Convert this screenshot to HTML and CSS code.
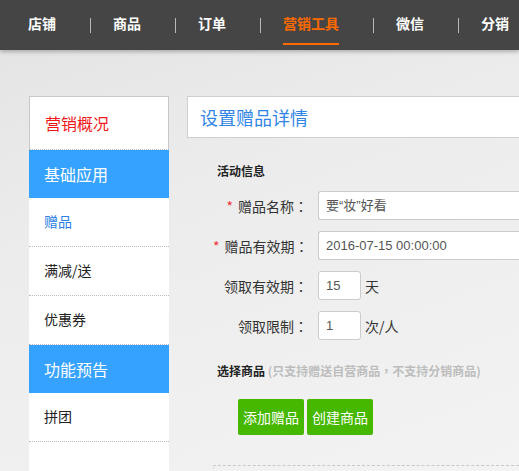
FILE: index.html
```html
<!DOCTYPE html>
<html lang="zh-CN">
<head>
<meta charset="utf-8">
<title>设置赠品详情</title>
<link rel="stylesheet" href="styles.css">
</head>
<body>
<header class="topbar">
  <nav class="nav">
    <a class="nav-item">店铺</a><span class="sep"></span>
    <a class="nav-item">商品</a><span class="sep"></span>
    <a class="nav-item">订单</a><span class="sep"></span>
    <a class="nav-item active">营销工具</a><span class="sep"></span>
    <a class="nav-item">微信</a><span class="sep"></span>
    <a class="nav-item">分销</a>
  </nav>
</header>
<div class="page">
  <aside class="sidebar">
    <div class="side-head">营销概况</div>
    <div class="side-group">基础应用</div>
    <div class="side-item current">赠品</div>
    <div class="side-item">满减/送</div>
    <div class="side-item">优惠券</div>
    <div class="side-group">功能预告</div>
    <div class="side-item">拼团</div>
  </aside>
  <main class="main">
    <div class="panel-head">设置赠品详情</div>
    <section class="form">
      <h3 class="section-title">活动信息</h3>
      <div class="row">
        <label class="label"><span class="req">*</span>赠品名称<span class="colon" lang="zh-TW">：</span></label>
        <div class="input wide">要“妆”好看</div>
      </div>
      <div class="row">
        <label class="label"><span class="req">*</span>赠品有效期<span class="colon" lang="zh-TW">：</span></label>
        <div class="input wide">2016-07-15 00:00:00</div>
      </div>
      <div class="row">
        <label class="label">领取有效期<span class="colon" lang="zh-TW">：</span></label>
        <div class="input small">15</div>
        <span class="unit">天</span>
      </div>
      <div class="row">
        <label class="label">领取限制<span class="colon" lang="zh-TW">：</span></label>
        <div class="input small">1</div>
        <span class="unit">次/人</span>
      </div>
      <h3 class="section-title goods">选择商品 <span class="note">(只支持赠送自营商品<span class="comma" lang="zh-TW">，</span>不支持分销商品)</span></h3>
      <div class="buttons">
        <button class="btn">添加赠品</button>
        <button class="btn">创建商品</button>
      </div>
      <div class="footer-line"></div>
    </section>
  </main>
</div>
</body>
</html>
```
FILE: styles.css
```css
* { box-sizing: border-box; }
html, body { margin: 0; padding: 0; }
body {
  width: 519px;
  height: 471px;
  overflow: hidden;
  font-family: "Noto Sans CJK SC", "Liberation Sans", sans-serif;
  background: linear-gradient(160deg, #e3e3e3 0%, #ececec 40%, #f3f3f3 100%);
  color: #333;
}
.topbar {
  height: 50px;
  background: #454545;
  box-shadow: 0 2px 4px rgba(0,0,0,0.25);
  position: relative;
  z-index: 1;
}
.nav {
  display: flex;
  align-items: center;
  height: 50px;
  padding-left: 28px;
  white-space: nowrap;
  overflow: hidden;
}
.nav-item {
  display: block;
  height: 50px;
  line-height: 46px;
  font-size: 14px;
  font-weight: bold;
  color: #fff;
  flex: none;
}
.nav-item.active {
  color: #ff6a00;
  position: relative;
}
.nav-item.active::after {
  content: "";
  position: absolute;
  left: 0;
  right: 0;
  top: 43px;
  height: 2px;
  background: #ff6a00;
}
.sep {
  flex: none;
  width: 1px;
  height: 15px;
  margin: 0 22px 0 34px;
  background: #b8b8b8;
}
.page {
  display: flex;
  align-items: flex-start;
  padding: 46px 0 0 29px;
  height: 421px;
  overflow: hidden;
}
.sidebar {
  width: 140px;
  flex: none;
  background: #fff;
  height: 375px;
}
.side-head {
  height: 54px;
  border: 1px solid #c8c8c8;
  border-bottom: 1px dotted #bbb;
  color: #f01818;
  font-size: 16px;
  line-height: 52px;
  padding-left: 15px;
}
.side-group {
  height: 48px;
  background: #36a2ff;
  color: #fff;
  font-size: 16px;
  line-height: 48px;
  padding-left: 15px;
}
.side-item {
  height: 49px;
  border-bottom: 1px dotted #bbb;
  font-size: 14px;
  line-height: 46px;
  padding-left: 15px;
  color: #222;
}
.side-item.current { color: #2b7fe6; }
.main {
  flex: 1;
  margin-left: 18px;
  min-width: 0;
}
.panel-head {
  height: 42px;
  background: #fff;
  border: 1px solid #cfcfcf;
  border-right: none;
  color: #2f84e6;
  font-size: 18px;
  line-height: 40px;
  padding-left: 12px;
  white-space: nowrap;
}
.form {
  padding: 24px 0 0 26px;
}
.section-title {
  margin: 0 0 11px 4px;
  height: 18px;
  font-size: 12px;
  font-weight: bold;
  color: #222;
  line-height: 18px;
  white-space: nowrap;
}
.row {
  display: flex;
  align-items: center;
  height: 29px;
  margin-bottom: 11px;
}
.label {
  width: 95px;
  flex: none;
  text-align: right;
  font-size: 14px;
  color: #333;
  margin-right: 10px;
  white-space: nowrap;
}
.colon, .comma { font-family: "Noto Sans CJK TC", sans-serif; }
.req {
  color: #f0323c;
  margin-right: 5px;
  font-size: 14px;
}
.input {
  height: 29px;
  background: #fff;
  border: 1px solid #ccc;
  border-radius: 3px;
  font-family: "Liberation Sans", "Noto Sans CJK SC", sans-serif;
  font-size: 13px;
  color: #555;
  line-height: 27px;
  padding-left: 7px;
  white-space: nowrap;
}
.input.wide { flex: 1; border-right: none; border-radius: 3px 0 0 3px; }
.input.small { width: 43px; flex: none; }
.unit {
  margin-left: 4px;
  font-size: 14px;
  color: #333;
}
.section-title.goods {
  margin-top: 22px;
  margin-bottom: 0;
}
.note {
  color: #bdbdbd;
  font-weight: bold;
}
.buttons {
  display: flex;
  gap: 3px;
  padding-left: 25px;
  margin-top: 19px;
}
.btn {
  width: 66px;
  height: 36px;
  border: none;
  border-radius: 2px;
  background: #46b800;
  color: #fff;
  font-family: "Noto Sans CJK SC", sans-serif;
  font-size: 14px;
  padding: 0;
}
.footer-line {
  margin-top: 30px;
  height: 4px;
  border-top: 1px dashed #c8c8c8;
  border-left: 1px solid #e0e0e0;
}
```
